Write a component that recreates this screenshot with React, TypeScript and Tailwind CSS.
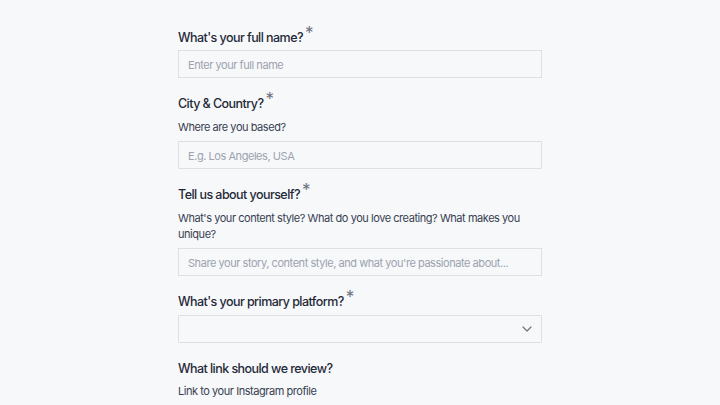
import React from "react";

function Star() {
  return <span className="ml-[2px] relative top-[-3px] text-[17px] leading-none font-normal text-[#6b7280]">*</span>;
}

function Label({ children, req }: { children: React.ReactNode; req?: boolean }) {
  return (
    <div className="h-5 pt-[1px] text-[12.5px] leading-[19px] font-medium tracking-[-0.55px] text-[#1f2937]">
      {children}
      {req && <Star />}
    </div>
  );
}

function Help({ children }: { children: React.ReactNode }) {
  return <div className="text-[11px] leading-4 tracking-[-0.45px] text-[#374151]">{children}</div>;
}

function Input({ ph }: { ph: string }) {
  return (
    <div className="h-[28px] border border-[#dde1e6] bg-[#f7f8fa] flex items-center pt-[2px] px-[9px] text-[11px] tracking-[-0.45px] text-[#9ca3af]">
      {ph}
    </div>
  );
}

export default function App() {
  return (
    <div className="w-[720px] h-[405px] overflow-hidden bg-[#f7f8fa]" style={{ fontFamily: "Inter, 'Noto Sans', sans-serif" }}>
      <div className="w-[364px] ml-[178px] pt-[27px] flex flex-col">
        <Label req>What's your full name?</Label>
        <div className="h-[3px]" />
        <Input ph="Enter your full name" />
        <div className="h-[15px]" />
        <Label req>City &amp; Country?</Label>
        <div className="h-[6px]" />
        <Help>Where are you based?</Help>
        <div className="h-[6px]" />
        <Input ph="E.g. Los Angeles, USA" />
        <div className="h-[15px]" />
        <Label req>Tell us about yourself?</Label>
        <div className="h-[6px]" />
        <Help>What's your content style? What do you love creating? What makes you unique?</Help>
        <div className="h-[6px]" />
        <Input ph="Share your story, content style, and what you're passionate about..." />
        <div className="h-[15px]" />
        <Label req>What's your primary platform?</Label>
        <div className="h-[4px]" />
        <div className="h-[28px] border border-[#dde1e6] bg-[#f7f8fa] flex items-center justify-end pr-[6px]">
          <svg width="16" height="16" viewBox="0 0 24 24" fill="none" stroke="#6b7280" strokeWidth="1.8" strokeLinecap="round" strokeLinejoin="round">
            <path d="m6 9 6 6 6-6" />
          </svg>
        </div>
        <div className="h-[15px]" />
        <Label>What link should we review?</Label>
        <div className="h-[5px]" />
        <Help>Link to your Instagram profile</Help>
      </div>
    </div>
  );
}
